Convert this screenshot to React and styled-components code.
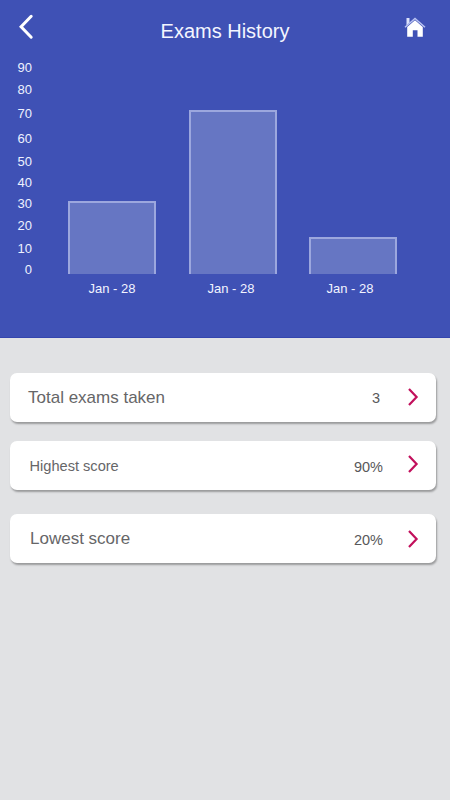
import React from 'react';
import styled, { createGlobalStyle } from 'styled-components';

const GlobalStyle = createGlobalStyle`
  * {
    margin: 0;
    padding: 0;
    box-sizing: border-box;
  }

  body {
    background: #e1e2e4;
    font-family: "Liberation Sans", Arial, sans-serif;
  }

  button {
    border: none;
    background: transparent;
    font: inherit;
    cursor: pointer;
  }
`;

// tick heights follow the hand spaced axis
const ticks = [
  { label: '90', height: 22 },
  { label: '80', height: 24 },
  { label: '70', height: 25 },
  { label: '60', height: 23 },
  { label: '50', height: 21 },
  { label: '40', height: 21 },
  { label: '30', height: 22 },
  { label: '20', height: 23 },
  { label: '10', height: 21 },
  { label: '0', height: 20 },
];

const exams = [
  { id: 1, date: 'Jan - 28', height: 73, gap: 34, shift: 0 },
  { id: 2, date: 'Jan - 28', height: 164, gap: 33, shift: 4 },
  { id: 3, date: 'Jan - 28', height: 37, gap: 0, shift: 6 },
];

const stats = [
  { title: 'Total exams taken', value: '3', size: 17, indent: 18, top: 0, inset: 34, drop: 0, arrow: 2 },
  { title: 'Highest score', value: '90%', size: 14.6, indent: 19.5, top: 19, inset: 31, drop: 2, arrow: 3 },
  { title: 'Lowest score', value: '20%', size: 17, indent: 20, top: 24, inset: 31, drop: 2, arrow: 0 },
];

function App() {
  return (
    <Screen>
      <GlobalStyle />
      <Panel>
        <Header>
          <BackButton aria-label="Back">
            <svg width="16" height="28" viewBox="0 0 16 28" fill="none">
              <path d="M13.2 3.3 3.1 13.7l10.1 10.5" stroke="#fff" strokeWidth="3" strokeLinecap="round" />
            </svg>
          </BackButton>
          <Title>Exams History</Title>
          <HomeButton aria-label="Home">
            <svg width="22" height="24" viewBox="0 0 22 24">
              <path d="M2.5 3h3v4.5l-3 3z" fill="#dce2fb" />
              <path d="M3.2 12 11 5.2l7.8 6.8v9.8h-5.3v-6.6H8.8v6.6H3.2z" fill="#fff" />
              <path d="M1 12.2 11 3.4l10 8.8" fill="none" stroke="#b9c3f2" strokeWidth="1.5" />
            </svg>
          </HomeButton>
        </Header>
        <Chart>
          <Axis>
            {ticks.map((tick) => (
              <Tick key={tick.label} $height={tick.height}>{tick.label}</Tick>
            ))}
          </Axis>
          <Bars>
            {exams.map((exam) => (
              <BarColumn key={exam.id} $gap={exam.gap}>
                <Bar $height={exam.height} />
                <BarLabel $shift={exam.shift}>{exam.date}</BarLabel>
              </BarColumn>
            ))}
          </Bars>
        </Chart>
      </Panel>
      <Stats>
        {stats.map((stat) => (
          <Card key={stat.title} $top={stat.top} $indent={stat.indent}>
            <CardTitle $size={stat.size}>{stat.title}</CardTitle>
            <CardValue $inset={stat.inset} $drop={stat.drop}>{stat.value}</CardValue>
            <Arrow $lift={stat.arrow}>
              <svg width="12" height="20" viewBox="0 0 12 20" fill="none">
                <path d="M2 2 9.6 10 2 18" stroke="#c2105c" strokeWidth="2.2" />
              </svg>
            </Arrow>
          </Card>
        ))}
      </Stats>
    </Screen>
  );
}

const Screen = styled.div`
  width: 450px;
  height: 800px;
  overflow: hidden;
  background: #e1e2e4;
`;

const Panel = styled.section`
  height: 338px;
  background: #3f51b5;
  border-bottom: 1px solid #3445ae;
`;

const Header = styled.header`
  display: flex;
  justify-content: space-between;
  height: 57px;
  padding: 13px 24px 0 18px;
`;

const BackButton = styled.button`
  width: 16px;
  height: 28px;
`;

const Title = styled.h1`
  padding-left: 12px;
  padding-top: 7px;
  font-size: 20px;
  line-height: 23px;
  font-weight: 400;
  color: #f4f6ff;
`;

const HomeButton = styled.button`
  width: 22px;
  height: 24px;
  padding-top: 2px;
`;

const Chart = styled.div`
  display: flex;
`;

const Axis = styled.div`
  width: 32px;
  text-align: right;
`;

const Tick = styled.div`
  height: ${(props) => props.$height}px;
  font-size: 13px;
  line-height: 21px;
  color: #eef1ff;
`;

const Bars = styled.div`
  display: flex;
  align-items: flex-end;
  height: 241px;
  padding-left: 36px;
`;

const BarColumn = styled.div`
  width: 88px;
  margin-right: ${(props) => props.$gap - 1}px;
`;

const Bar = styled.div`
  height: ${(props) => props.$height}px;
  background: #6676c3;
  border: 2px solid #9ca7de;
  border-bottom: none;
`;

const BarLabel = styled.div`
  height: 24px;
  padding-top: 7px;
  padding-right: ${(props) => props.$shift}px;
  font-size: 13px;
  line-height: 16px;
  text-align: center;
  color: #f2f4ff;
`;

const Stats = styled.main`
  padding: 35px 14px 0 10px;
`;

const Card = styled.div`
  display: flex;
  align-items: center;
  height: 49px;
  margin-top: ${(props) => props.$top}px;
  padding-left: ${(props) => props.$indent}px;
  padding-right: 17px;
  border-radius: 7px;
  background: #fff;
  box-shadow: 1px 2px 2px rgba(0, 0, 0, 0.32);
`;

const CardTitle = styled.span`
  flex: 1;
  font-size: ${(props) => props.$size}px;
  color: #666668;
`;

const CardValue = styled.span`
  padding-top: ${(props) => props.$drop}px;
  margin-right: ${(props) => props.$inset - 7}px;
  font-size: 14.5px;
  color: #58585a;
`;

const Arrow = styled.span`
  display: flex;
  padding-bottom: ${(props) => props.$lift}px;
`;

export default App;
